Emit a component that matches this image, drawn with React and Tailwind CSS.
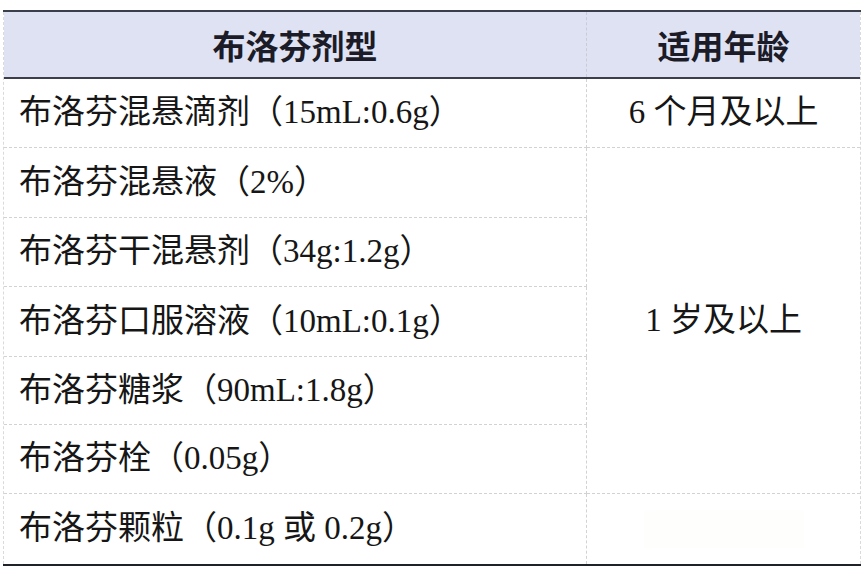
import React from 'react';

const rows = [
  { name: '布洛芬混悬滴剂', spec: '（15mL:0.6g）' },
  { name: '布洛芬混悬液', spec: '（2%）' },
  { name: '布洛芬干混悬剂', spec: '（34g:1.2g）' },
  { name: '布洛芬口服溶液', spec: '（10mL:0.1g）' },
  { name: '布洛芬糖浆', spec: '（90mL:1.8g）' },
  { name: '布洛芬栓', spec: '（0.05g）' },
  { name: '布洛芬颗粒', spec: '（0.1g 或 0.2g）' },
];

// row heights measured from the picture (border included)
const heights = ['h-[69px]', 'h-[70px]', 'h-[69px]', 'h-[70px]', 'h-[68px]', 'h-[69px]', 'h-[70px]'];

const bodyFont = { fontFamily: '"Liberation Serif", "Noto Sans CJK SC", serif' };

const App = () => {
  return (
    <div className="w-[865px] h-[571px] bg-white pt-[10px] pl-[3px]">
      <div className="w-[858px] border-t-2 border-b-2 border-t-[#3b3f4b] border-b-[#1f2229]">
        <div
          className="border-x border-dashed border-x-[#dadada] text-[33px] text-[#161616]"
          style={bodyFont}
        >
          {/* header */}
          <div
            className="grid grid-cols-[583px_1fr] h-[67px] bg-[#dfe2f3] border-b-2 border-[#3b3f4b] font-bold text-[#1b1c28]"
            style={{ fontFamily: '"Noto Sans CJK SC", sans-serif' }}
          >
            <div className="flex items-center justify-center pt-[3px] border-r border-dashed border-[#c9cbd6]">布洛芬剂型</div>
            <div className="flex items-center justify-center pt-[3px]">适用年龄</div>
          </div>

          {/* body */}
          <div className="grid grid-cols-[583px_1fr]">
            {rows.map((row, i) => (
              <div
                key={row.name}
                className={`${heights[i]} flex items-center pl-[15px] border-r border-dashed border-[#d2d2d2] ${i < rows.length - 1 ? 'border-b' : ''}`}
                style={{ gridRow: i + 1, gridColumn: 1 }}
              >
                <span className="whitespace-nowrap">{row.name}{row.spec}</span>
              </div>
            ))}
            <div className="flex items-center justify-center border-b border-dashed border-[#d2d2d2]" style={{ gridRow: 1, gridColumn: 2 }}>
              6 个月及以上
            </div>
            <div className="flex items-center justify-center border-b border-dashed border-[#d2d2d2]" style={{ gridRow: '2 / span 5', gridColumn: 2 }}>
              1 岁及以上
            </div>
            <div className="flex items-center justify-center" style={{ gridRow: 7, gridColumn: 2 }}>
              <div className="w-[160px] h-[38px] bg-[#fefefc]"></div>
            </div>
          </div>
        </div>
      </div>
    </div>
  );
};

export default App;
